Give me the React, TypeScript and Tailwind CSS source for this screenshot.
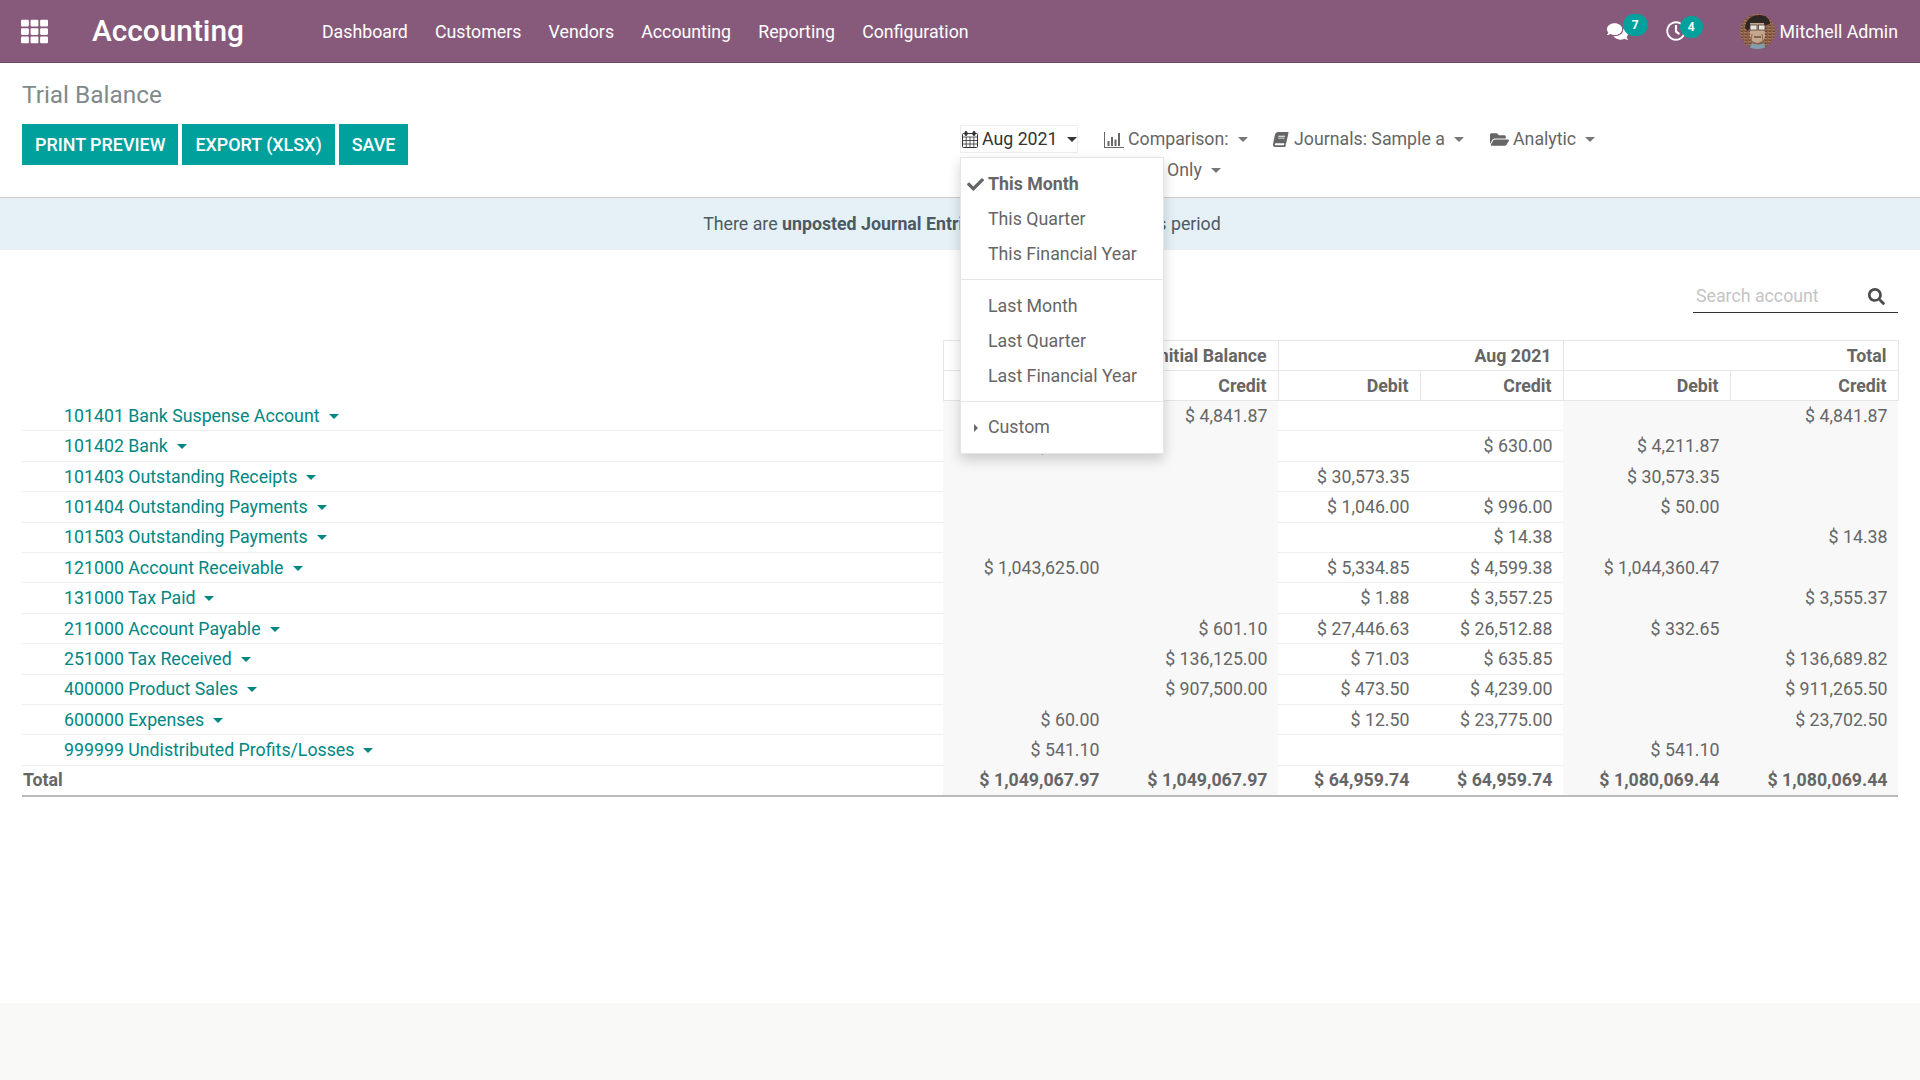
import { FaBook, FaCheck, FaComments, FaFilter, FaFolderOpen, FaRegClock, FaSearch, FaTh } from "react-icons/fa";

type Row = { account: string; values: string[] };

const rows: Row[] = [
  { account: "101401 Bank Suspense Account", values: ["", "$ 4,841.87", "", "", "", "$ 4,841.87"] },
  { account: "101402 Bank", values: ["$ 4,841.87", "", "", "$ 630.00", "$ 4,211.87", ""] },
  { account: "101403 Outstanding Receipts", values: ["", "", "$ 30,573.35", "", "$ 30,573.35", ""] },
  { account: "101404 Outstanding Payments", values: ["", "", "$ 1,046.00", "$ 996.00", "$ 50.00", ""] },
  { account: "101503 Outstanding Payments", values: ["", "", "", "$ 14.38", "", "$ 14.38"] },
  { account: "121000 Account Receivable", values: ["$ 1,043,625.00", "", "$ 5,334.85", "$ 4,599.38", "$ 1,044,360.47", ""] },
  { account: "131000 Tax Paid", values: ["", "", "$ 1.88", "$ 3,557.25", "", "$ 3,555.37"] },
  { account: "211000 Account Payable", values: ["", "$ 601.10", "$ 27,446.63", "$ 26,512.88", "$ 332.65", ""] },
  { account: "251000 Tax Received", values: ["", "$ 136,125.00", "$ 71.03", "$ 635.85", "", "$ 136,689.82"] },
  { account: "400000 Product Sales", values: ["", "$ 907,500.00", "$ 473.50", "$ 4,239.00", "", "$ 911,265.50"] },
  { account: "600000 Expenses", values: ["$ 60.00", "", "$ 12.50", "$ 23,775.00", "", "$ 23,702.50"] },
  { account: "999999 Undistributed Profits/Losses", values: ["$ 541.10", "", "", "", "$ 541.10", ""] },
];

const totals = ["$ 1,049,067.97", "$ 1,049,067.97", "$ 64,959.74", "$ 64,959.74", "$ 1,080,069.44", "$ 1,080,069.44"];
const navItems = ["Dashboard", "Customers", "Vendors", "Accounting", "Reporting", "Configuration"];

function Caret({ className = "" }: { className?: string }) {
  return <span className={`inline-block h-0 w-0 border-x-[5px] border-t-[5px] border-x-transparent border-t-current ${className}`} />;
}

function Badge({ value, className }: { value: string; className: string }) {
  return (
    <span className={`absolute flex h-[22px] items-center justify-center rounded-full bg-[#00a09d] text-[12px] font-bold text-white ${className}`}>
      {value}
    </span>
  );
}

function Avatar() {
  return (
    <svg viewBox="0 0 35 35" className="h-[35px] w-[35px]">
      <defs>
        <clipPath id="avatar-clip">
          <circle cx="17.5" cy="17.5" r="17.5" />
        </clipPath>
        <pattern id="avatar-brick" width="4" height="3" patternUnits="userSpaceOnUse">
          <rect width="4" height="3" fill="#8a5f48" />
          <rect width="3" height="1" fill="#a8775a" />
          <rect x="1" y="2" width="2" height="1" fill="#6c4a38" />
        </pattern>
      </defs>
      <g clipPath="url(#avatar-clip)">
        <rect width="35" height="35" fill="url(#avatar-brick)" />
        <path d="M5 14C6 4 13 1 19 1c7 0 11 4 11 9l-4 1-14-1-4 7z" fill="#2e2622" />
        <path d="M10 9h14l1 12c0 5-3 8-7.500 8S10 26 10 21z" fill="#c4a58e" />
        <rect x="10" y="11" width="7" height="5" fill="#e9e4dc" stroke="#3a312c" strokeWidth=".7" />
        <rect x="18.500" y="11" width="6.500" height="5" fill="#e9e4dc" stroke="#3a312c" strokeWidth=".7" />
        <path d="M14 23h7" stroke="#6f4f40" strokeWidth="1.500" />
        <path d="M12 20l-1 7 6 3 6-3-1-7" fill="none" stroke="#8e6a55" strokeWidth="1" />
        <path d="M9 35l3-6 6 2 6-2 2 6z" fill="#7f9fae" />
      </g>
    </svg>
  );
}

function BarChartIcon() {
  return (
    <svg viewBox="0 0 20 16" className="h-[16px] w-[20px] fill-current">
      <path d="M0 0h1v15h19v1H0z" />
      <rect x="3.500" y="9" width="2" height="5" />
      <rect x="7" y="5" width="2" height="9" />
      <rect x="10.500" y="7.500" width="2" height="6.500" />
      <rect x="14" y="1" width="2" height="13" />
    </svg>
  );
}

function CalendarIcon() {
  return (
    <svg viewBox="0 0 16 17" className="h-[17px] w-[16px] fill-none stroke-[#333]">
      <rect x=".5" y="2.500" width="15" height="14" rx="1" />
      <path d="M.5 6h15M.5 9.500h15M.5 13h15M4.200 6v10.500M8 6v10.500M11.800 6v10.500" strokeWidth=".8" />
      <rect x="3" y=".5" width="2" height="4" rx=".8" fill="#333" />
      <rect x="11" y=".5" width="2" height="4" rx=".8" fill="#333" />
    </svg>
  );
}

function Filter({ icon, label, className }: { icon: React.ReactNode; label: string; className: string }) {
  return (
    <button className={`flex h-[28px] items-center whitespace-nowrap pt-px text-[#666] ${className}`}>
      {icon}
      {label}
      <Caret className="ml-[9px] text-[#777]" />
    </button>
  );
}

function MenuItem({ label, active, children }: { label: string; active?: boolean; children?: React.ReactNode }) {
  return (
    <div className={`relative flex h-[35px] items-center pl-[27px] text-[#666] ${active ? "font-bold" : ""}`}>
      {children}
      {label}
    </div>
  );
}

function DateMenu() {
  return (
    <div className="absolute left-0 top-[32px] z-10 w-[204px] border border-[#e3e6e8] bg-white pb-[8px] pt-[9px] shadow-[0_6px_12px_rgba(0,0,0,0.18)]">
      <MenuItem label="This Month" active>
        <FaCheck className="absolute left-[6px] text-[17px] text-[#666]" />
      </MenuItem>
      <MenuItem label="This Quarter" />
      <MenuItem label="This Financial Year" />
      <div className="mb-[9px] mt-[7px] border-t border-[#e6e6e6]" />
      <MenuItem label="Last Month" />
      <MenuItem label="Last Quarter" />
      <MenuItem label="Last Financial Year" />
      <div className="mb-[8px] mt-[7px] border-t border-[#e6e6e6]" />
      <MenuItem label="Custom">
        <span className="absolute left-[13px] h-0 w-0 border-y-[4px] border-l-[4px] border-y-transparent border-l-[#666]" />
      </MenuItem>
    </div>
  );
}

export default function App() {
  const isShaded = (index: number) => index === 0 || index === 1 || index === 4 || index === 5;

  return (
    <div className="flex h-[1080px] flex-col overflow-hidden bg-white font-['Roboto',sans-serif] text-[17.75px] text-[#666]">
      <header className="flex h-[63px] shrink-0 items-center border-b border-[#6f4a65] bg-[#875a7b] text-white">
        <FaTh className="ml-[21px] text-[27px]" />
        <span className="ml-[44px] pt-px text-[29.8px] font-medium">Accounting</span>
        <nav className="ml-[78px] flex gap-[27.200px] pt-[3px]">
          {navItems.map((item) => (
            <a key={item}>{item}</a>
          ))}
        </nav>
        <div className="ml-auto flex items-center pr-[22px]">
          <span className="relative ml-px flex">
            <FaComments className="text-[21px]" />
            <Badge value="7" className="-top-[7px] left-[16px] w-[25px]" />
          </span>
          <span className="relative ml-[38px] flex">
            <FaRegClock className="text-[20px]" />
            <Badge value="4" className="-top-[5px] left-[14px] w-[23px]" />
          </span>
          <span className="ml-[54px] mr-[5px] flex">
            <Avatar />
          </span>
          <span className="pt-[2px]">Mitchell Admin</span>
        </div>
      </header>

      <main className="flex-1">
        <section className="flex h-[135px] border-b border-[#ccc] px-[22px]">
          <div className="w-[938px] shrink-0">
            <h1 className="mt-[16px] text-[24.400px] leading-[32px] text-[#7f8a8a]">Trial Balance</h1>
            <div className="mt-[13px] flex gap-[4px] text-[17.9px]">
              <button className="h-[41px] bg-[#00a09d] px-[13px] pt-px font-medium text-white">PRINT PREVIEW</button>
              <button className="h-[41px] bg-[#00a09d] px-[13px] pt-px font-medium text-white">EXPORT (XLSX)</button>
              <button className="h-[41px] bg-[#00a09d] px-[13px] pt-px font-medium text-white">SAVE</button>
            </div>
          </div>
          <div className="mt-[62px] w-[700px]">
            <div className="flex h-[28px] gap-[24px]">
              <div className="relative">
                <button className="flex h-[28px] w-[118px] items-center border border-[#eee] pt-px text-[#333]">
                  <span className="ml-px mr-[4px] flex">
                    <CalendarIcon />
                  </span>
                  Aug 2021
                  <Caret className="ml-[9px]" />
                </button>
                <DateMenu />
              </div>
              <Filter icon={<span className="ml-[2px] mr-[4px] flex"><BarChartIcon /></span>} label="Comparison:" className="w-[145px]" />
              <Filter icon={<FaBook className="ml-[2px] mr-[6px] -skew-x-12 text-[15px]" />} label="Journals: Sample a" className="w-[195px]" />
              <Filter icon={<FaFolderOpen className="mr-[4px] text-[19px]" />} label="Analytic" className="w-[107px]" />
            </div>
            <div className="mt-[3px] flex">
              <Filter icon={<FaFilter className="mr-[4px] text-[14px]" />} label="Options: Posted Entries Only" className="w-[270px]" />
            </div>
          </div>
        </section>

        <div className="flex h-[52px] items-center justify-center bg-[#e5f1f6] pl-[4px] text-[#4c5a63]">
          <span>
            There are <b className="font-bold">unposted Journal Entries</b> prior or included in this period
          </span>
        </div>

        <section className="px-[22px]">
          <div className="flex justify-end pt-[30px]">
            <div className="flex h-[33px] w-[205px] items-center justify-between border-b border-[#333] pt-px">
              <span className="pl-[3px] text-[#c4c4c4]">Search account</span>
              <FaSearch className="mr-[13px] text-[17px] text-[#4c4c4c]" />
            </div>
          </div>

          <table className="mt-[27px] w-[1876px] table-fixed border-collapse">
            <colgroup>
              <col className="w-[921px]" />
              <col className="w-[167px]" />
              <col className="w-[168px]" />
              <col className="w-[142px]" />
              <col className="w-[143px]" />
              <col className="w-[167px]" />
              <col className="w-[168px]" />
            </colgroup>
            <thead className="font-bold">
              <tr className="h-[30px]">
                <th />
                <th colSpan={2} className="border border-[#e6e6e6] pr-[11px] pt-px text-right font-bold">Initial Balance</th>
                <th colSpan={2} className="border border-[#e6e6e6] pr-[11px] pt-px text-right font-bold">Aug 2021</th>
                <th colSpan={2} className="border border-[#e6e6e6] pr-[11px] pt-px text-right font-bold">Total</th>
              </tr>
              <tr className="h-[30px]">
                <th />
                {["Debit", "Credit", "Debit", "Credit", "Debit", "Credit"].map((label, index) => (
                  <th key={`${label}-${index}`} className="border border-[#e6e6e6] pr-[11px] pt-px text-right font-bold">
                    {label}
                  </th>
                ))}
              </tr>
            </thead>
            <tbody>
              {rows.map((row) => (
                <tr key={row.account} className="h-[30.400px]">
                  <td className="border-b border-[#eee] pl-[42px] pt-px text-[#008784]">
                    {row.account}
                    <Caret className="ml-[9px] -translate-y-[3px]" />
                  </td>
                  {row.values.map((value, index) => (
                    <td key={index} className={`pr-[10.500px] pt-px text-right ${isShaded(index) ? "bg-[#f8f8f8]" : "border-b border-[#eee]"}`}>
                      {value}
                    </td>
                  ))}
                </tr>
              ))}
              <tr className="h-[30.400px] border-b-2 border-[#bbb] font-bold">
                <td className="pl-px">Total</td>
                {totals.map((value, index) => (
                  <td key={index} className={`pr-[10.500px] text-right ${isShaded(index) ? "bg-[#f8f8f8]" : ""}`}>
                    {value}
                  </td>
                ))}
              </tr>
            </tbody>
          </table>
        </section>
      </main>

      <footer className="h-[77px] shrink-0 bg-[#f9f9f7]" />
    </div>
  );
}
